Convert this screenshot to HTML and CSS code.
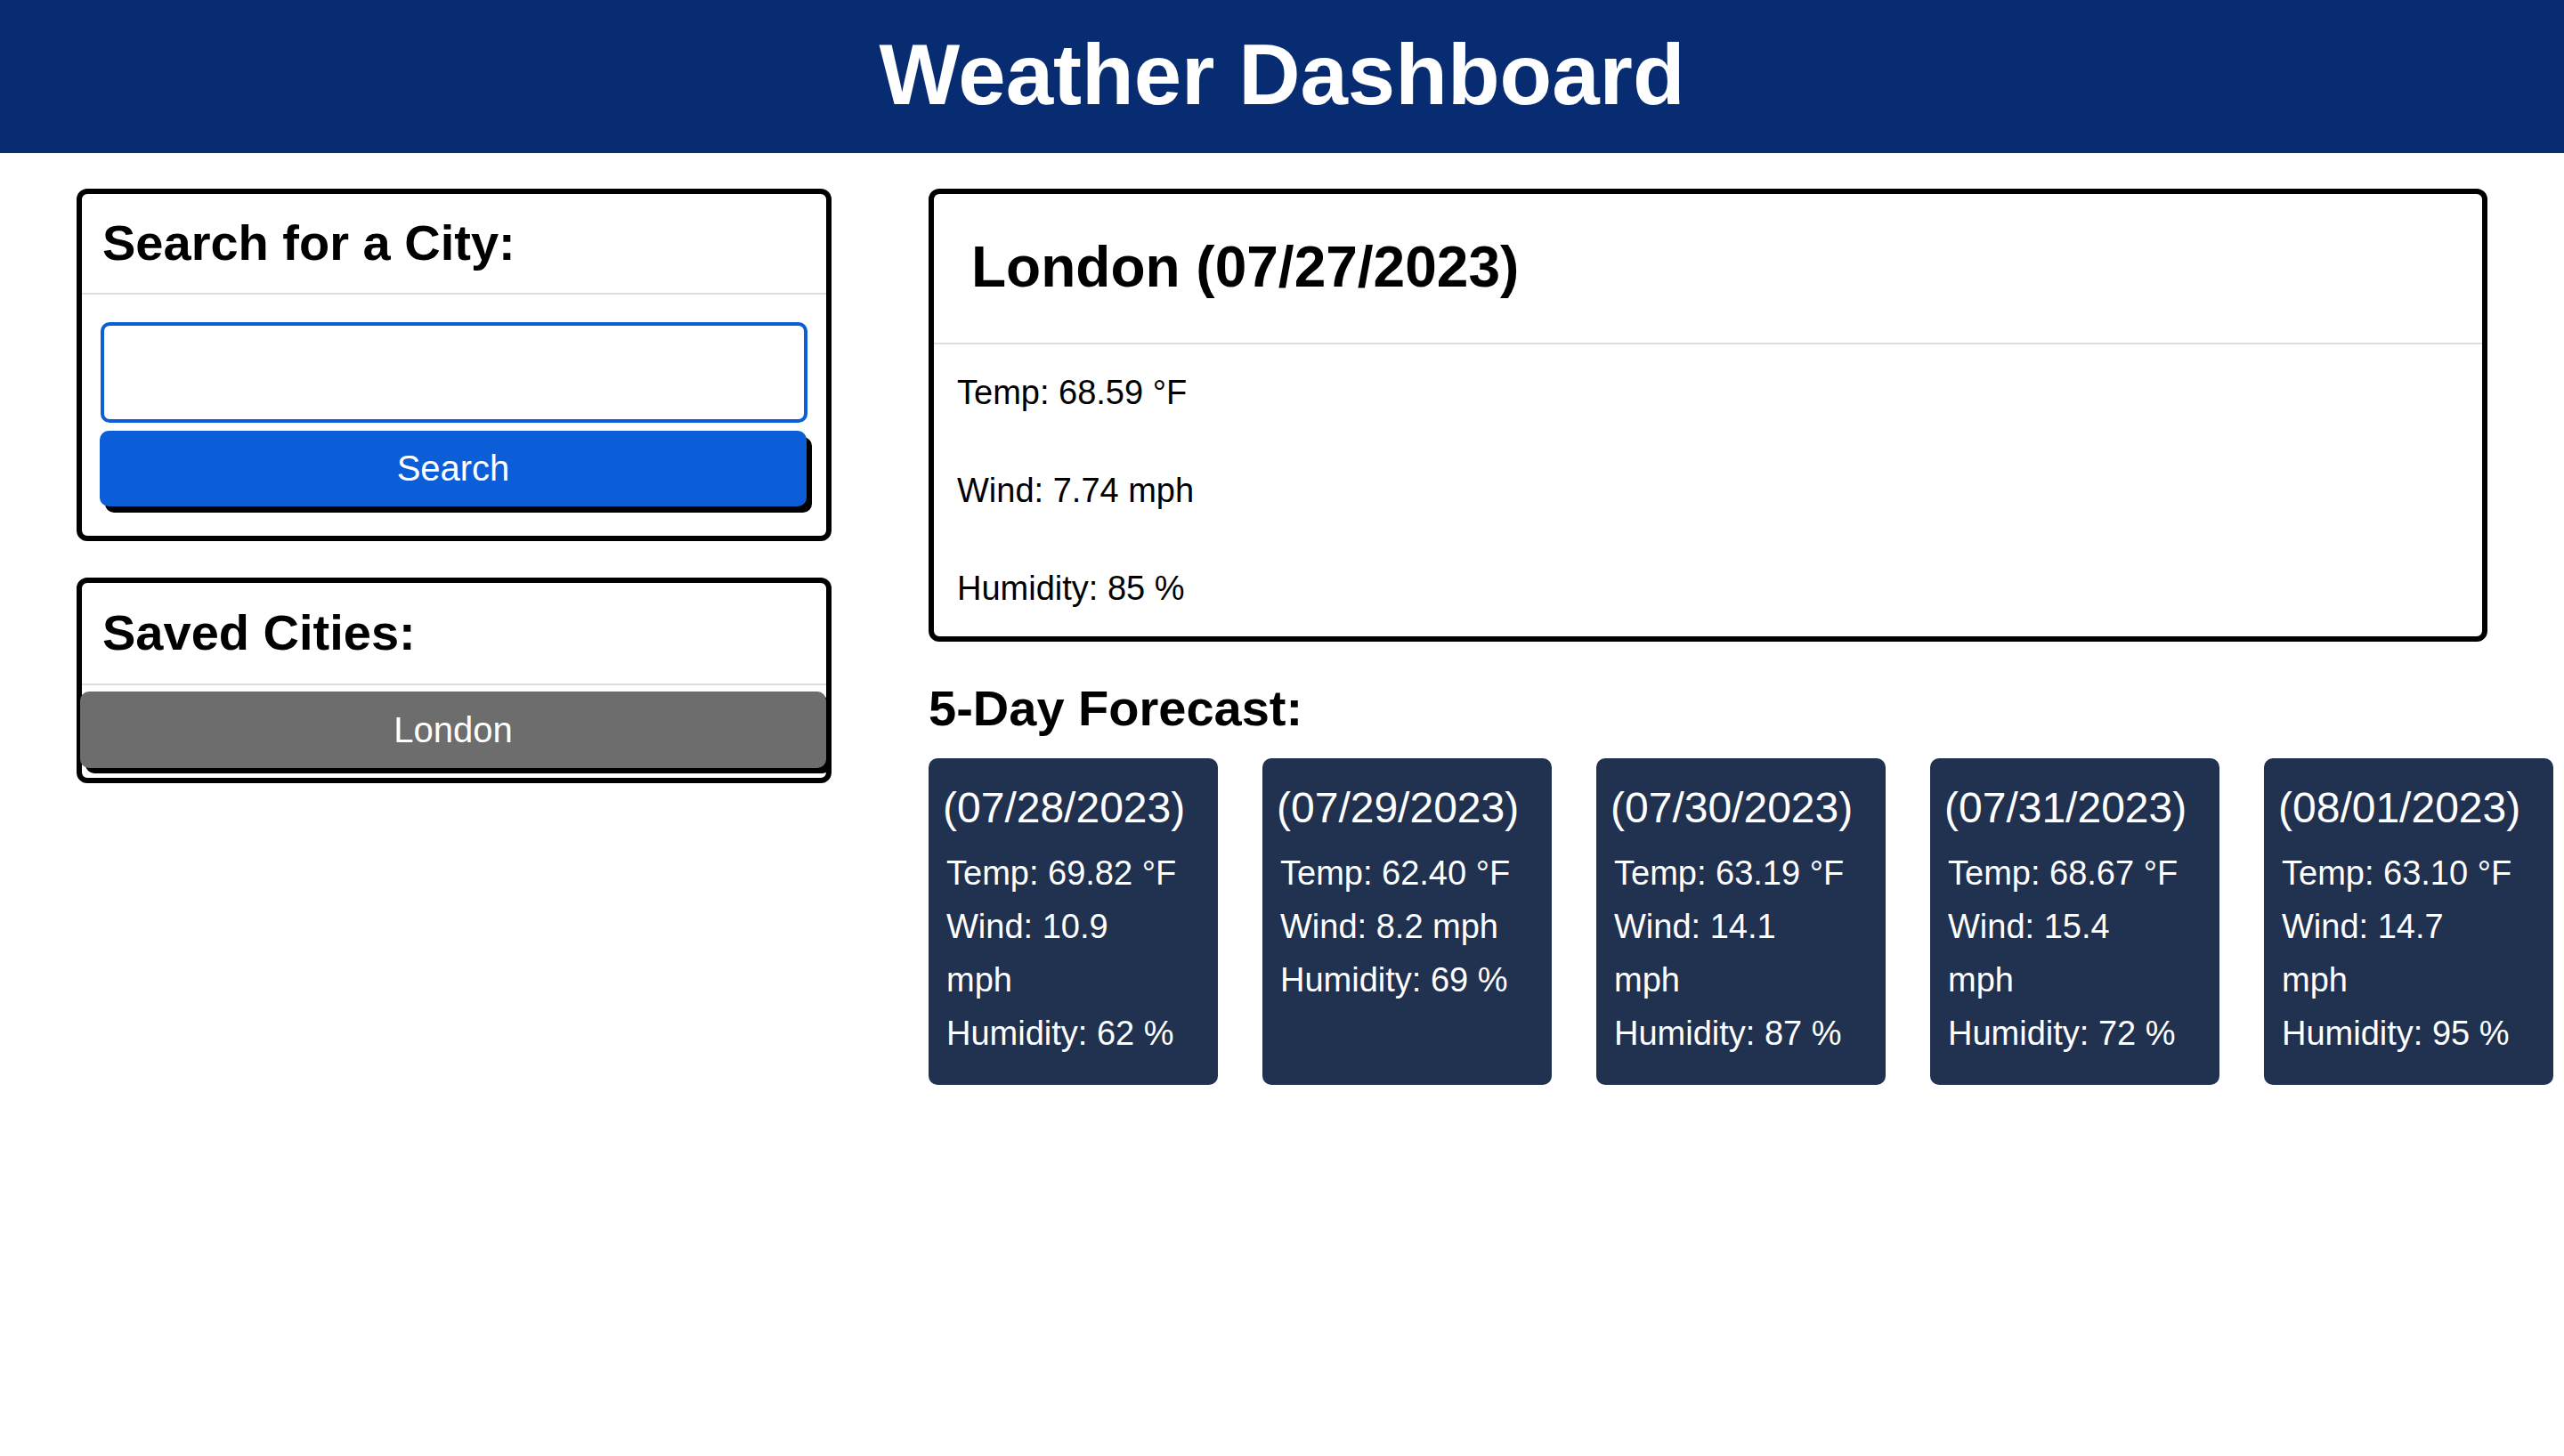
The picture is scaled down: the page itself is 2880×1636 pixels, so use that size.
FILE: index.html
```html
<!DOCTYPE html>
<html lang="en">
<head>
<meta charset="utf-8">
<title>Weather Dashboard</title>
<link rel="stylesheet" href="styles.css">
</head>
<body>
<header class="site-header">
  <h1 class="site-title">Weather Dashboard</h1>
</header>
<main class="layout">
  <aside class="sidebar">
    <section class="panel">
      <div class="panel-header">
        <h2 class="panel-title">Search for a City:</h2>
      </div>
      <div class="search-body">
        <input class="search-input" type="text" aria-label="City">
        <button class="search-btn" type="button">Search</button>
      </div>
    </section>
    <section class="panel">
      <div class="panel-header saved-header">
        <h2 class="panel-title">Saved Cities:</h2>
      </div>
      <div class="saved-body">
        <button class="city-btn" type="button">London</button>
      </div>
    </section>
  </aside>
  <section class="content">
    <div class="current">
      <div class="current-header">
        <h2 class="current-title">London (07/27/2023)</h2>
      </div>
      <div class="current-body">
        <p class="stat">Temp: 68.59 °F</p>
        <p class="stat">Wind: 7.74 mph</p>
        <p class="stat">Humidity: 85 %</p>
      </div>
    </div>
    <h2 class="forecast-title">5-Day Forecast:</h2>
    <div class="forecast-row">
      <div class="day-card">
        <h3 class="day-date">(07/28/2023)</h3>
        <p class="day-line">Temp: 69.82 °F</p>
        <p class="day-line">Wind: 10.9 mph</p>
        <p class="day-line">Humidity: 62 %</p>
      </div>
      <div class="day-card">
        <h3 class="day-date">(07/29/2023)</h3>
        <p class="day-line">Temp: 62.40 °F</p>
        <p class="day-line">Wind: 8.2 mph</p>
        <p class="day-line">Humidity: 69 %</p>
      </div>
      <div class="day-card">
        <h3 class="day-date">(07/30/2023)</h3>
        <p class="day-line">Temp: 63.19 °F</p>
        <p class="day-line">Wind: 14.1 mph</p>
        <p class="day-line">Humidity: 87 %</p>
      </div>
      <div class="day-card">
        <h3 class="day-date">(07/31/2023)</h3>
        <p class="day-line">Temp: 68.67 °F</p>
        <p class="day-line">Wind: 15.4 mph</p>
        <p class="day-line">Humidity: 72 %</p>
      </div>
      <div class="day-card">
        <h3 class="day-date">(08/01/2023)</h3>
        <p class="day-line">Temp: 63.10 °F</p>
        <p class="day-line">Wind: 14.7 mph</p>
        <p class="day-line">Humidity: 95 %</p>
      </div>
    </div>
  </section>
</main>
</body>
</html>
```
FILE: styles.css
```css
* {
  box-sizing: border-box;
}

html, body {
  margin: 0;
  padding: 0;
  background: #ffffff;
}

body {
  font-family: "Liberation Sans", Arial, Helvetica, sans-serif;
  color: #000000;
  overflow: hidden;
}

.site-header {
  background: #072c71;
  height: 172px;
  padding: 29px 0 33px;
  text-align: center;
}

.site-title {
  margin: 0;
  font-size: 96px;
  line-height: 110px;
  font-weight: 700;
  color: #ffffff;
}

.layout {
  display: flex;
  align-items: flex-start;
  gap: 109px;
  padding: 40px 0 0 86px;
}

.sidebar {
  flex: none;
  width: 848px;
  display: flex;
  flex-direction: column;
  gap: 41px;
}

.panel {
  border: 6px solid #000000;
  border-radius: 12px;
  background: #ffffff;
}

.panel-header {
  padding: 21px 23px 23px;
  border-bottom: 2px solid #dedede;
}

.saved-header {
  padding: 22px 23px 24px;
}

.panel-title {
  margin: 0;
  font-size: 56px;
  line-height: 67px;
  font-weight: 700;
}

.search-body {
  padding: 31px 21px 33px;
  display: flex;
  flex-direction: column;
  gap: 9px;
}

.search-input {
  display: block;
  width: 100%;
  height: 113px;
  border: 4px solid #0b5ed7;
  border-radius: 10px;
  background: #ffffff;
  font-family: inherit;
  font-size: 40px;
  padding: 0 20px;
  outline: none;
}

.search-btn {
  display: block;
  width: 100%;
  height: 85px;
  margin-left: -1px;
  border: none;
  border-radius: 10px;
  background: #0b5ed7;
  color: #ffffff;
  font-family: inherit;
  font-size: 40px;
  box-shadow: 6px 7px 0 #000000;
}

.saved-body {
  padding: 7px 0 11px;
}

.city-btn {
  display: block;
  width: calc(100% + 2px);
  height: 86px;
  margin-left: -2px;
  border: none;
  border-radius: 10px;
  background: #6d6d6d;
  color: #ffffff;
  font-family: inherit;
  font-size: 40px;
  box-shadow: 6px 6px 0 #000000;
}

.content {
  flex: none;
  width: 1751px;
}

.current {
  border: 6px solid #000000;
  border-radius: 12px;
}

.current-header {
  padding: 44px 42px 46px;
  border-bottom: 2px solid #dedede;
}

.current-title {
  margin: 0;
  font-size: 64px;
  line-height: 77px;
  font-weight: 700;
}

.current-body {
  padding: 31px 26px 31px;
}

.stat {
  margin: 0 0 64px;
  font-size: 38px;
  line-height: 46px;
}

.stat:last-child {
  margin-bottom: 0;
}

.forecast-title {
  margin: 41px 0 23px;
  font-size: 56px;
  line-height: 67px;
  font-weight: 700;
}

.forecast-row {
  display: flex;
  gap: 50px;
  width: 1825px;
}

.day-card {
  flex: none;
  width: 325px;
  padding: 28px 41px 28px 20px;
  border-radius: 10px;
  background: #213150;
  color: #ffffff;
}

.day-date {
  margin: 0 0 15px -4px;
  font-size: 48px;
  line-height: 56px;
  font-weight: 400;
  white-space: nowrap;
}

.day-line {
  margin: 0;
  font-size: 38px;
  line-height: 60px;
}
```
